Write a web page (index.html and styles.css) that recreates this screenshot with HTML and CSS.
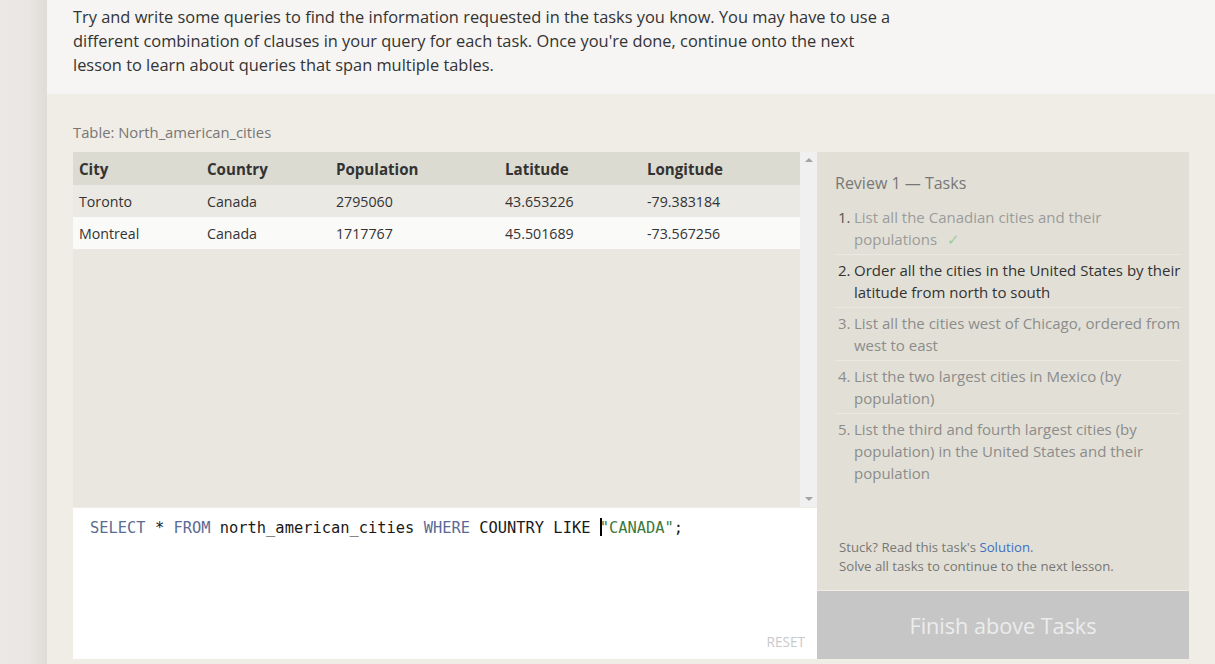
FILE: index.html
```html
<!DOCTYPE html>
<html>
<head>
<meta charset="utf-8">
<link rel="stylesheet" href="styles.css">
</head>
<body>
<div class="side"></div>
<div class="main">
  <div class="intro">
    <p>Try and write some queries to find the information requested in the tasks you know. You may have to use a different combination of clauses in your query for each task. Once you're done, continue onto the next lesson to learn about queries that span multiple tables.</p>
  </div>
  <div class="work">
    <div class="label">Table: North_american_cities</div>
    <div class="grid">
      <div class="left">
        <div class="tablewrap">
          <div class="tablearea">
            <table class="data">
              <thead>
                <tr><th class="c1">City</th><th class="c2">Country</th><th class="c3">Population</th><th class="c4">Latitude</th><th class="c5">Longitude</th></tr>
              </thead>
              <tbody>
                <tr class="odd"><td>Toronto</td><td>Canada</td><td>2795060</td><td>43.653226</td><td>-79.383184</td></tr>
                <tr class="even"><td>Montreal</td><td>Canada</td><td>1717767</td><td>45.501689</td><td>-73.567256</td></tr>
              </tbody>
            </table>
          </div>
          <div class="scrollbar">
            <span class="arrow up"></span>
            <span class="arrow down"></span>
          </div>
        </div>
        <div class="editor">
          <div class="code"><span class="kw">SELECT</span> * <span class="kw">FROM</span> north_american_cities <span class="kw">WHERE</span> COUNTRY LIKE <span class="cursor"></span><span class="str">"CANADA"</span>;</div>
          <div class="reset">RESET</div>
        </div>
      </div>
      <div class="right">
        <div class="tasks">
          <div class="title">Review 1 — Tasks</div>
          <ol class="list">
            <li class="done"><span class="num">1.</span><span class="txt">List all the Canadian cities and their populations<span class="check">✓</span></span></li>
            <li class="current"><span class="num">2.</span><span class="txt">Order all the cities in the United States by their latitude from north to south</span></li>
            <li><span class="num">3.</span><span class="txt">List all the cities west of Chicago, ordered from west to east</span></li>
            <li><span class="num">4.</span><span class="txt">List the two largest cities in Mexico (by population)</span></li>
            <li class="last"><span class="num">5.</span><span class="txt">List the third and fourth largest cities (by population) in the United States and their population</span></li>
          </ol>
          <div class="stuck">
            <div>Stuck? Read this task's <a class="sol">Solution</a>.</div>
            <div>Solve all tasks to continue to the next lesson.</div>
          </div>
        </div>
        <div class="finish">Finish above Tasks</div>
      </div>
    </div>
  </div>
</div>
</body>
</html>
```

FILE: styles.css
```css
html, body {
  margin: 0;
  padding: 0;
  height: 100%;
}
body {
  display: flex;
  font-family: "Open Sans", "Noto Sans", sans-serif;
  background: #efede6;
  overflow: hidden;
}
.side {
  width: 47px;
  flex: none;
  background: linear-gradient(to right, #ebe8e5 0%, #e9e6e3 60%, #dfdcd8 100%);
}
.main {
  flex: 1;
  display: flex;
  flex-direction: column;
}
.intro {
  background: #f6f5f3;
  padding: 5px 26px 17px 26px;
}
.intro p {
  margin: 0;
  width: 822px;
  font-size: 16.4px;
  line-height: 24px;
  color: #333;
}
.work {
  background: #efede6;
  padding: 28px 26px 0 26px;
  flex: 1;
}
.label {
  font-size: 14.8px;
  line-height: 20px;
  color: #777;
  margin-bottom: 10px;
}
.grid {
  display: flex;
}
.left {
  width: 744px;
  display: flex;
  flex-direction: column;
}
.tablewrap {
  display: flex;
  height: 355px;
}
.tablearea {
  flex: 1;
  background: #e9e7e0;
}
.scrollbar {
  width: 17px;
  background: #f0f0f0;
  display: flex;
  flex-direction: column;
  justify-content: space-between;
  align-items: center;
  padding: 6px 0;
  box-sizing: border-box;
}
.arrow {
  width: 0;
  height: 0;
  border-left: 4px solid transparent;
  border-right: 4px solid transparent;
}
.arrow.up { border-bottom: 4px solid #a3a3a3; }
.arrow.down { border-top: 4px solid #a3a3a3; }
.data {
  width: 100%;
  border-collapse: collapse;
  font-size: 14.2px;
  color: #333;
}
.data th {
  text-align: left;
  font-weight: 700;
  font-size: 15.1px;
  height: 33px;
  padding: 0 6px;
  background: #dcdbd1;
  color: #333;
}
.data td {
  height: 32px;
  padding: 0 6px;
}
.data tr.odd td { background: #ebe9e3; }
.data tr.even td { background: #fafaf9; }
.c1 { width: 116px; }
.c2 { width: 117px; }
.c3 { width: 157px; }
.c4 { width: 130px; }
.editor {
  margin-top: 1px;
  height: 151px;
  background: #fff;
  position: relative;
  box-sizing: border-box;
  padding: 9px 17px;
  width: 744px;
}
.code {
  font-family: "DejaVu Sans Mono", "Liberation Mono", monospace;
  font-size: 15.4px;
  line-height: 22px;
  color: #1a1a1a;
  white-space: pre;
}
.kw { color: #5a6b95; }
.str { color: #3c7a3c; }
.cursor {
  display: inline-block;
  width: 2px;
  height: 18px;
  background: #000;
  vertical-align: -3px;
  margin-right: -2px;
}
.reset {
  position: absolute;
  right: 12px;
  bottom: 8px;
  font-size: 13.6px;
  color: #c9c9c9;
}
.right {
  width: 372px;
  display: flex;
  flex-direction: column;
}
.tasks {
  background: #e2e0d6;
  height: 438px;
  box-sizing: border-box;
  padding: 20px 8px 0 18px;
  position: relative;
}
.title {
  font-size: 16px;
  line-height: 22px;
  color: #777;
  margin-bottom: 12px;
}
.list {
  list-style: none;
  margin: 0;
  padding: 0;
  font-size: 15px;
  line-height: 22px;
}
.list li {
  display: flex;
  padding: 0 0 4px 3px;
  border-bottom: 1px solid #ebe9e2;
  margin-bottom: 4px;
  color: #8c8c8c;
}
.list li.last { border-bottom: none; }
.num { width: 16px; flex: none; }
.txt { flex: 1; }
.list li.done { color: #9b9b9b; }
.list li.done .num { color: #555; }
.list li.current { color: #333; }
.check {
  display: inline-block;
  line-height: 1;
  color: #9ccc9c;
  margin-left: 10px;
}
.stuck {
  position: absolute;
  left: 22px;
  top: 386px;
  font-size: 13.2px;
  line-height: 19px;
  color: #777;
}
.sol { color: #3e6ec3; }
.finish {
  margin-top: 1px;
  height: 68px;
  background: #c6c6c6;
  color: #ececec;
  font-size: 21.6px;
  display: flex;
  align-items: center;
  justify-content: center;
}
```
